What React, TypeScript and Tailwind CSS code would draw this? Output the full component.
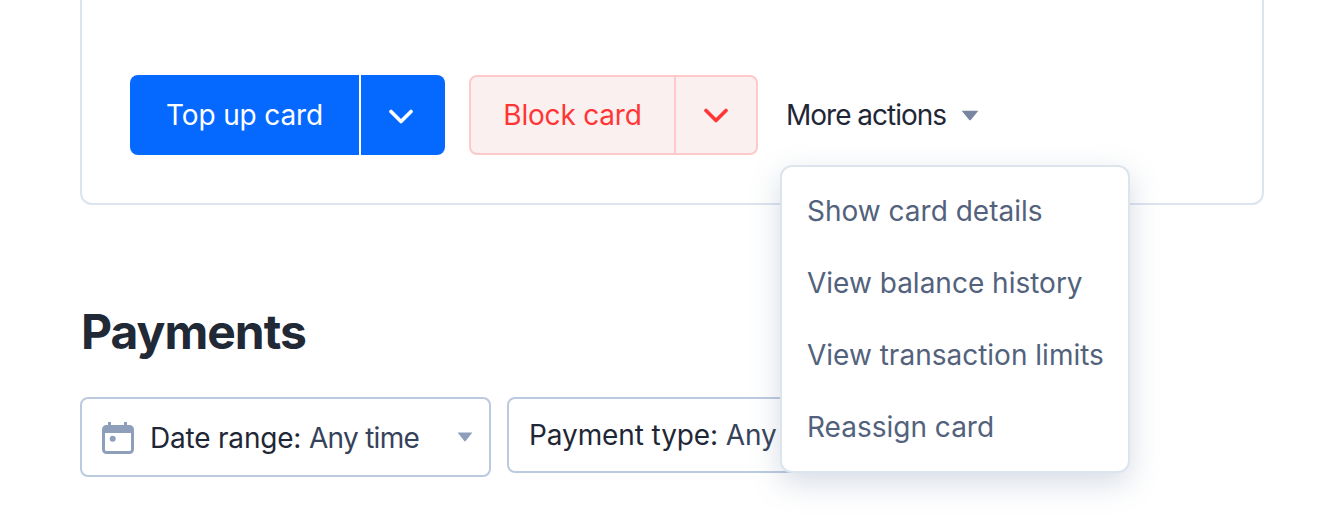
import React from 'react';

const font = { fontFamily: 'Inter, sans-serif' };

const Chevron = ({ className }: { className: string }) => (
  <svg viewBox="0 0 24 16" className={className} fill="none" stroke="currentColor" strokeWidth="3.6" strokeLinecap="round" strokeLinejoin="round">
    <path d="M2 2.5 L12 12.5 L22 2.5" />
  </svg>
);

const Caret = ({ className }: { className: string }) => (
  <svg viewBox="0 0 16 10" preserveAspectRatio="none" className={className} fill="currentColor">
    <path d="M0.6 0.6 H15.4 L8.9 8.8 Q8 9.8 7.1 8.8 Z" />
  </svg>
);

const CalendarIcon = () => (
  <svg viewBox="0 0 32 32" className="mt-px h-8 w-8 text-[#8e9fbc]" fill="none">
    <rect x="1.5" y="4.5" width="29" height="26" rx="3" stroke="currentColor" strokeWidth="3" />
    <rect x="1.5" y="4" width="29" height="7" rx="2" fill="currentColor" />
    <rect x="6" y="0" width="3" height="6" fill="currentColor" />
    <rect x="22" y="0" width="3" height="6" fill="currentColor" />
    <circle cx="10.7" cy="16.7" r="3" fill="currentColor" />
  </svg>
);

const menuItems = ['Show card details', 'View balance history', 'View transaction limits', 'Reassign card'];

export default function App() {
  return (
    <div className="relative h-[524px] w-[1338px] overflow-hidden bg-white px-20" style={font}>
      <section className="flex h-[205px] w-[1184px] items-start gap-6 rounded-b-xl border-2 border-t-0 border-[#dce4ee] px-12 pt-[75px]">
        <div className="flex h-20 w-[315px] rounded-lg bg-[#0669ff] text-white">
          <button className="w-[229px] text-[28px] leading-none tracking-[-0.15px]">Top up card</button>
          <div className="w-0.5 bg-white" />
          <button className="flex flex-1 items-center justify-center pr-1">
            <Chevron className="mt-1 h-4 w-6" />
          </button>
        </div>
        <div className="flex h-20 w-[289px] rounded-lg border-2 border-[#fdc9c9] bg-[#fbf0f0] text-[#ff3636]">
          <button className="w-[203px] text-[28px] leading-none tracking-[-0.2px]">Block card</button>
          <div className="w-0.5 bg-[#fdc9c9]" />
          <button className="flex flex-1 items-center justify-center">
            <Chevron className="mt-0.5 h-4 w-6" />
          </button>
        </div>
        <button className="ml-1 flex h-20 items-center gap-[15px] text-[28px] leading-none tracking-[-1px] text-[#1f2736]">
          More actions
          <Caret className="h-[11px] w-[18px] text-[#78879f]" />
        </button>
      </section>

      <h2 className="mt-[100px] pl-px text-[48px] font-bold leading-[54px] tracking-[-1px] text-[#212936]">Payments</h2>

      <div className="mt-[38px] flex items-start gap-4">
        <button className="flex h-20 w-[411px] items-center rounded-lg border-2 border-[#bccadf] pl-5 pr-4 text-[28px] leading-none tracking-[-0.2px] text-[#1f2736]">
          <CalendarIcon />
          <span className="ml-4 mt-px">
            Date range: <span className="tracking-[-0.7px] text-[#36425a]">Any time</span>
          </span>
          <Caret className="ml-auto h-2.5 w-4 text-[#8e9fbc]" />
        </button>
        <button className="flex h-[76px] w-[320px] items-center whitespace-nowrap rounded-lg border-2 border-[#bccadf] pl-5 text-[28px] leading-none tracking-[-0.1px] text-[#1f2736]">
          Payment type:&nbsp;<span className="text-[#36425a]">Any</span>
        </button>
      </div>

      <div className="absolute left-[780px] top-[165px] w-[350px] rounded-xl border-2 border-[#dce4ee] bg-white py-2 shadow-[0_10px_30px_rgba(90,115,150,0.25)]">
        {menuItems.map((item) => (
          <div key={item} className="flex h-[72px] items-center pl-[25px] text-[28px] leading-none text-[#53627c]">
            {item}
          </div>
        ))}
      </div>
    </div>
  );
}
